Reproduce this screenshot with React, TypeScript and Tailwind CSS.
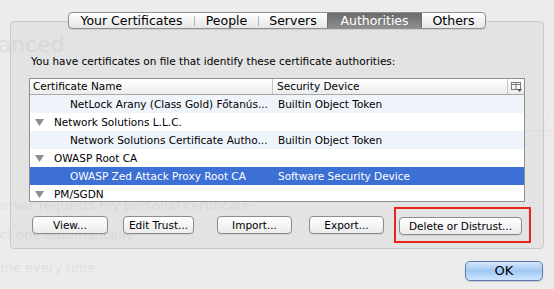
const tabs = [
  { label: "Your Certificates", w: "w-[125px]" },
  { label: "People", w: "w-[63px]" },
  { label: "Servers", w: "w-[68px]" },
  { label: "Authorities", w: "w-[93px]", active: true },
  { label: "Others", w: "w-[63px]" },
];

const rows = [
  { name: "NetLock Arany (Class Gold) Főtanús...", device: "Builtin Object Token", child: true },
  { name: "Network Solutions L.L.C.", device: "" },
  { name: "Network Solutions Certificate Autho...", device: "Builtin Object Token", child: true },
  { name: "OWASP Root CA", device: "" },
  { name: "OWASP Zed Attack Proxy Root CA", device: "Software Security Device", child: true, selected: true },
  { name: "PM/SGDN", device: "" },
];

function Triangle() {
  return (
    <svg width="9" height="7" viewBox="0 0 9 7" className="shrink-0">
      <polygon points="0,0 9,0 4.5,7" fill="#8d8d8d" />
    </svg>
  );
}

function ColumnIcon() {
  return (
    <svg width="11" height="10" viewBox="0 0 11 10">
      <rect x="0.5" y="0.5" width="9" height="7" fill="none" stroke="#7a7a7a" />
      <line x1="0.5" y1="2.5" x2="9.5" y2="2.5" stroke="#7a7a7a" />
      <line x1="5" y1="0.5" x2="5" y2="7.5" stroke="#7a7a7a" />
      <polygon points="6,7 11,7 8.5,10" fill="#555" />
    </svg>
  );
}

function Button({ label, className = "" }: { label: string; className?: string }) {
  return (
    <button
      className={`h-[18px] shrink-0 rounded-[4px] border border-[#8c8c8c] bg-gradient-to-b from-white to-[#ebebeb] text-[10.5px] leading-[16px] text-black shadow-[0_1px_0_rgba(0,0,0,0.08)] ${className}`}
    >
      {label}
    </button>
  );
}

export default function App() {
  return (
    <div className="relative w-[554px] h-[289px] overflow-hidden bg-[#ececec] font-['DejaVu_Sans',sans-serif]">
      {/* window behind the sheet, showing through */}
      <div className="absolute inset-0 text-[#e0e0e0] whitespace-nowrap">
        <div className="absolute left-[-44px] top-[30px] text-[22px] leading-[30px]">Advanced</div>
        <div className="absolute left-[-60px] top-[198px] text-[13px] leading-[16px]">
          When a server requests my personal certificate:
        </div>
        <div className="absolute left-[-28px] top-[227px] text-[13px] leading-[16px]">Select one automatically</div>
        <div className="absolute left-[-27px] top-[260px] text-[13px] leading-[16px]">Ask me every time</div>
        <div className="absolute left-[520px] top-[130px] h-px w-[40px] bg-[#ece2d6]" />
        <div className="absolute left-[545px] top-[106px] h-[34px] w-[34px] rounded-full border border-[#e4e4e4]" />
      </div>

      <div className="relative pt-[12px]">
        <div className="relative z-10 flex justify-center">
          <div className="flex h-[17px] items-center rounded-[4px] border border-[#8e8e8e] bg-gradient-to-b from-white to-[#e6e6e6] text-[12.5px] leading-[15px] shadow-[0_1px_1px_rgba(0,0,0,0.1)]">
            {tabs.map((t, i) => (
              <div key={t.label} className="flex h-full items-center">
                {i > 0 && !t.active && !tabs[i - 1].active && (
                  <span className="h-[10px] w-px bg-[#b4b4b4]" />
                )}
                {(t.active || tabs[i - 1]?.active) && i > 0 && <span className="h-full w-px bg-[#707070]" />}
                <div
                  className={`${t.w} flex h-full items-center justify-center ${
                    t.active
                      ? "bg-gradient-to-b from-[#6a6a6a] to-[#8e8e8e] text-white"
                      : "text-black"
                  }`}
                >
                  {t.label}
                </div>
              </div>
            ))}
          </div>
        </div>

        <div className="mx-[10px] -mt-[8px] h-[228px] rounded-[4px] border border-[#c9c9c9] bg-black/[0.035] px-[18px] pt-[33px]">
          <p className="pl-[2px] text-[10.5px] leading-[13px] text-black">
            You have certificates on file that identify these certificate authorities:
          </p>

          <div className="mt-[10px] h-[124px] overflow-hidden border border-[#8f8f8f] bg-white text-[10.5px] text-black">
            <div className="flex h-[16px] border-b border-[#a9a9a9] bg-gradient-to-b from-white to-[#ececec] leading-[15px]">
              <div className="w-[243px] border-r border-[#c3c3c3] pl-[3px]">Certificate Name</div>
              <div className="flex-1 border-r border-[#c3c3c3] pl-[4px]">Security Device</div>
              <div className="flex w-[16px] items-center justify-center">
                <ColumnIcon />
              </div>
            </div>
            {rows.map((r, i) => (
              <div
                key={r.name}
                className={`flex h-[18px] items-center leading-[18px] ${
                  r.selected ? "bg-[#3d70d5] text-white" : i % 2 === 0 ? "bg-[#eff3fa]" : "bg-white"
                }`}
              >
                <div className={`flex w-[248px] items-center ${r.child ? "pl-[40px]" : "pl-[5px]"}`}>
                  {!r.child && <Triangle />}
                  <span className={r.child ? "" : "pl-[10px]"}>{r.name}</span>
                </div>
                <div>{r.device}</div>
              </div>
            ))}
          </div>

          <div className="mt-[5px] flex items-center">
            <Button label="View..." className="ml-[3px] w-[76px]" />
            <Button label="Edit Trust..." className="ml-[15px] w-[71px]" />
            <Button label="Import..." className="ml-[23px] w-[75px]" />
            <Button label="Export..." className="ml-[17px] w-[75px]" />
            <div className="ml-[10px] shrink-0 border-2 border-[#e8241d] py-[4px] pl-[3px] pr-[7px]">
              <Button label="Delete or Distrust..." className="w-[123px]" />
            </div>
          </div>
        </div>

        <div className="mt-[12px] flex justify-end pr-[11px]">
          <button className="h-[20px] w-[78px] rounded-[5px] border border-[#5a78ad] bg-gradient-to-b from-[#d6e8fc] via-[#9fc7f3] to-[#cde6fe] text-[13px] leading-[18px] text-black shadow-[0_1px_1px_rgba(0,0,0,0.15)]">
            OK
          </button>
        </div>
      </div>
    </div>
  );
}
